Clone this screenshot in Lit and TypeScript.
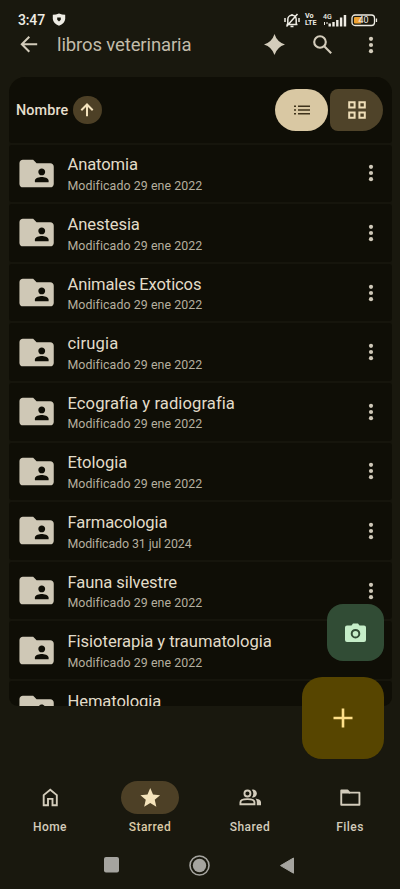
import { LitElement, html, css, svg } from "lit";
import { customElement, property } from "lit/decorators.js";

interface Folder {
  name: string;
  date: string;
  track: number;
  dateTrack?: number;
}

const folders: Folder[] = [
  { name: "Anatomia", date: "29 ene 2022", track: -0.13 },
  { name: "Anestesia", date: "29 ene 2022", track: -0.1 },
  { name: "Animales Exoticos", date: "29 ene 2022", track: -0.14 },
  { name: "cirugia", date: "29 ene 2022", track: 0.15 },
  { name: "Ecografia y radiografia", date: "29 ene 2022", track: 0.08 },
  { name: "Etologia", date: "29 ene 2022", track: -0.05 },
  { name: "Farmacologia", date: "31 jul 2024", track: -0.1, dateTrack: -0.1 },
  { name: "Fauna silvestre", date: "29 ene 2022", track: -0.1 },
  { name: "Fisioterapia y traumatologia", date: "29 ene 2022", track: -0.04 },
  { name: "Hematologia", date: "29 ene 2022", track: -0.1 },
];

const dots = html`<svg width="6" height="18" viewBox="0 0 6 18" fill="currentColor">
  <circle cx="3" cy="2.8" r="2.1" /><circle cx="3" cy="9" r="2.1" /><circle cx="3" cy="15.2" r="2.1" />
</svg>`;

@customElement("folder-row")
class FolderRow extends LitElement {
  @property({ attribute: false }) folder!: Folder;

  static styles = css`
    :host {
      display: flex;
      flex: none;
      height: 57.6px;
      box-sizing: border-box;
      padding: 0 17.6px 0 7.4px;
      align-items: center;
      background: #0f0e06;
      border-radius: 3px;
    }
    .folder { color: #cfc8b6; flex: none; }
    .texts { margin: 1.4px 0 0 10.4px; flex: 1; white-space: nowrap; }
    .name { font-size: 16.6px; line-height: 22px; color: #e2dcc9; }
    .date { font-size: 12.4px; line-height: 17px; margin-top: 0.6px; color: #b5af9f; }
    .more { color: #cfc8b8; display: flex; }
  `;

  render() {
    return html`
      <svg class="folder" width="41.2" height="41.2" viewBox="0 0 24 24" fill="currentColor">
        <path d="M20 6h-8l-2-2H4c-1.1 0-1.99.9-1.99 2L2 18c0 1.1.9 2 2 2h16c1.1 0 2-.9 2-2V8c0-1.1-.9-2-2-2zm-5 3c1.1 0 2 .9 2 2s-.9 2-2 2-2-.9-2-2 .9-2 2-2zm4 8h-8v-1c0-1.33 2.67-2 4-2s4 .67 4 2v1z" />
      </svg>
      <div class="texts">
        <div class="name" style="letter-spacing:${this.folder.track}px">${this.folder.name}</div>
        <div class="date" style="letter-spacing:${this.folder.dateTrack ?? 0.06}px">Modificado ${this.folder.date}</div>
      </div>
      <div class="more">${dots}</div>
    `;
  }
}

const tabs = [
  {
    label: "Home",
    icon: svg`<path d="M5 20.5V9.7L12 4l7 5.700V20.500H14.400V13.700H9.600V20.500Z" fill="none" stroke="currentColor" stroke-width="2"/>`,
  },
  {
    label: "Starred",
    active: true,
    icon: svg`<path fill="currentColor" d="M12 18.200 18.500 22.200l-1.720-7.450L22.500 9.780l-7.550-.640L12 2.200 9.050 9.140 1.500 9.780l5.720 4.970-1.720 7.450z"/>`,
  },
  {
    label: "Shared",
    icon: svg`<g fill="none" stroke="currentColor" stroke-width="2"><circle cx="9" cy="8" r="3.200"/><path d="M1.500 19.500v-2C1.500 14.900 6 14 9 14s7.500 .9 7.500 3.500v2z"/></g><path fill="currentColor" d="M13.600 12a5.500 5.500 0 0 0 0-8A4.200 4.200 0 1 1 13.600 12zM17.500 13.300c3 .5 6 1.600 6 4.100v3.100h-4.500v-3.200c0-1.600-.5-3-1.500-4z"/>`,
  },
  {
    label: "Files",
    icon: svg`<path d="M2.400 4.700h6.600l2.200 2.400h10.600V20H2.400z" fill="none" stroke="currentColor" stroke-width="2" stroke-linejoin="round"/><path fill="currentColor" d="M3 5h6l3 3H3z"/>`,
  },
];

@customElement("app-root")
class AppRoot extends LitElement {
  static styles = css`
    :host {
      display: flex;
      flex-direction: column;
      position: relative;
      width: 400px;
      height: 889px;
      overflow: hidden;
      background: #19180e;
      font-family: Roboto, "Liberation Sans", sans-serif;
      color: #d3ccbb;
    }
    svg { display: block; flex: none; }
    .status { height: 30px; flex: none; box-sizing: border-box; padding: 10px 22.500px 0 18px; display: flex; align-items: center; color: #eeece4; }
    .time { font-size: 14px; font-weight: 500; letter-spacing: -0.15px; width: 34px; }
    .signals { margin-left: auto; display: flex; align-items: center; }
    .volte { font-size: 7.200px; line-height: 6.600px; font-weight: 700; margin: 0 3px 0 5px; width: 13.500px; }
    .bar { height: 47px; flex: none; box-sizing: border-box; padding: 0 26px 18px 17.500px; display: flex; align-items: center; }
    .title { font-size: 18.500px; font-weight: 400; letter-spacing: -0.12px; margin-left: 16.500px; flex: 1; white-space: nowrap; color: #c3bcaa; }
    .bar .spark { margin-right: 28px; }
    .bar .search { margin-right: 36px; }
    .list { height: 629px; flex: none; margin: 0 8.500px; display: flex; flex-direction: column; gap: 2px; overflow: hidden; border-radius: 16px 16px 9px 9px; background: #16150c; }
    .head { height: 65.700px; flex: none; box-sizing: border-box; padding: 0 8.500px 0 7.500px; display: flex; align-items: center; background: #0f0e06; border-radius: 0 0 3px 3px; }
    .sort { font-size: 14.400px; font-weight: 500; color: #e6dfcd; width: 57px; letter-spacing: 0.1px; padding-top: 1px; }
    .arrow { width: 28.500px; height: 28.500px; border-radius: 50%; background: #4d4026; display: grid; place-items: center; }
    .modes { margin-left: auto; display: flex; gap: 2px; }
    .mode { width: 53px; height: 41.500px; display: grid; place-items: center; background: #4f4329; color: #eedeb8; border-radius: 8px 21px 21px 8px; }
    .mode.on { background: #d9c8a3; color: #3e321b; border-radius: 21px; }
    .fab { position: absolute; display: grid; place-items: center; }
    .camera { left: 326.500px; top: 604px; width: 57.500px; height: 57px; border-radius: 16px; background: #314c35; color: #c5edc8; }
    .add { left: 302px; top: 677px; width: 82px; height: 82px; border-radius: 20px; background: #574500; color: #ffe089; }
    .tabs { margin-top: 75px; height: 58px; flex: none; display: grid; grid-template-columns: repeat(4, 1fr); }
    .tab { display: flex; flex-direction: column; align-items: center; }
    .pill { width: 57.500px; height: 33px; border-radius: 17px; display: grid; place-items: center; }
    .active .pill { background: #4d4026; color: #f4e3bb; }
    .active { color: #dccba6; }
    .label { margin-top: 4.600px; font-size: 12px; line-height: 16px; font-weight: 500; letter-spacing: 0.45px; }
    .system { height: 50px; flex: none; display: flex; justify-content: center; align-items: center; gap: 70px; color: #a5a49f; padding: 1px 2px 0 0; }
  `;

  render() {
    return html`
      <div class="status">
        <div class="time">3:47</div>
        <svg width="14" height="14" viewBox="0 0 14 14"><path d="M7 .5Q10 1.800 13.200 1.800V6Q12.700 10.500 7 12.800Q1.300 10.500 .8 6V1.800Q4 1.800 7 .5Z" fill="currentColor"/><path d="M5.200 4.500h3.600v2.300L7 8.500L5.200 6.800z" fill="#19180e"/></svg>
        <div class="signals">
          <svg width="16" height="15" viewBox="0 0 16 15" fill="none" stroke="currentColor" stroke-width="1.500"><path d="M3.800 11V6.500a4.200 4.200 0 0 1 8.400 0V11M2.500 11.500h11M6.500 13.500h3M13.500 1 2.500 13.500M1 5v4M15 5v4M8 1v1.500"/></svg>
          <div class="volte">Vo<br />LTE</div>
          <svg width="25" height="15" viewBox="0 0 25 15" fill="currentColor"><text x="1" y="6.200" font-size="7" font-weight="500" fill="currentColor">4G</text><path d="M2.500 9v3M5 9v2" stroke="currentColor" fill="none"/><rect x="6.500" y="10.500" width="2.400" height="3"/><rect x="10.300" y="9" width="2.400" height="4.500"/><rect x="14.100" y="7" width="2.400" height="6.500"/><rect x="17.900" y="4.500" width="2.400" height="9"/><rect x="21.700" y="2" width="2.500" height="11.500"/></svg>
          <svg width="27" height="13" viewBox="0 0 27 13" style="margin-left:4px"><rect x="1" y="1" width="22.500" height="10.500" rx="3" fill="none" stroke="currentColor" stroke-width="1.300"/><rect x="3" y="3" width="7.500" height="6.500" rx="1" fill="#eda233"/><rect x="24.800" y="4.500" width="1.300" height="3.500" fill="currentColor"/><text x="7.500" y="9.400" font-size="9" fill="currentColor">40</text></svg>
        </div>
      </div>
      <div class="bar">
        <svg width="23" height="23" viewBox="0 0 23 23" fill="none" stroke="currentColor" stroke-width="2"><path d="M19.200 11.300H4M11.300 3.800 3.800 11.300l7.500 7.500"/></svg>
        <div class="title">libros veterinaria</div>
        <svg class="spark" width="21" height="21" viewBox="0 0 21 21" fill="currentColor"><path d="M10.500 0Q13 8 21 10.500Q13 13 10.500 21Q8 13 0 10.500Q8 8 10.500 0Z"/></svg>
        <svg class="search" width="19" height="19" viewBox="0 0 19 19" fill="none" stroke="currentColor" stroke-width="2.100"><circle cx="7" cy="7" r="5.800"/><path d="m11 11 7.200 7.200"/></svg>
        ${dots}
      </div>
      <div class="list">
        <div class="head">
          <div class="sort">Nombre</div>
          <div class="arrow"><svg width="14" height="14" viewBox="0 0 14 14" fill="none" stroke="#f3e2bd" stroke-width="2"><path d="M7 13.200V2M1.300 7.200 7 1.500 12.700 7.200"/></svg></div>
          <div class="modes">
            <div class="mode on"><svg width="16" height="10" viewBox="0 0 16 10" fill="currentColor"><path d="M4 .5h12V2H4zM4 4.200h12v1.500H4zM4 8h12v1.500H4zM0 .5h2V2H0zM0 4.200h2v1.500H0zM0 8h2v1.500H0z"/></svg></div>
            <div class="mode"><svg width="18" height="18" viewBox="0 0 18 18" fill="none" stroke="currentColor" stroke-width="2"><path d="M1.200 1.200h5.400v5.400H1.200zM11.400 1.200h5.400v5.400h-5.400zM1.200 11.400h5.400v5.400H1.200zM11.400 11.400h5.400v5.400h-5.400z"/></svg></div>
          </div>
        </div>
        ${folders.map((f) => html`<folder-row .folder=${f}></folder-row>`)}
      </div>
      <div class="tabs">
        ${tabs.map(
          (t) => html`<div class="tab ${t.active ? "active" : ""}">
            <div class="pill"><svg width="22.500" height="22.500" viewBox="0 0 24 24">${t.icon}</svg></div>
            <div class="label">${t.label}</div>
          </div>`,
        )}
      </div>
      <div class="system">
        <svg width="15" height="16" viewBox="0 0 15 16"><rect width="15" height="15.500" rx="2" fill="currentColor"/></svg>
        <svg width="21" height="21" viewBox="0 0 21 21"><circle cx="10.500" cy="10.500" r="9.500" fill="none" stroke="currentColor" stroke-width="1.600"/><circle cx="10.500" cy="10.500" r="6.700" fill="currentColor"/></svg>
        <svg width="14" height="17" viewBox="0 0 14 17"><path d="M13.500 1v15.200L.5 8.600z" fill="currentColor" stroke="currentColor" stroke-linejoin="round"/></svg>
      </div>
      <div class="fab camera"><svg width="21" height="19" viewBox="0 0 21 19"><path fill="currentColor" d="M2 2.500h4.500L8 .5h5l1.500 2H19a2 2 0 0 1 2 2V17a2 2 0 0 1-2 2H2a2 2 0 0 1-2-2V4.500a2 2 0 0 1 2-2z"/><circle cx="10.500" cy="10.700" r="3.800" fill="none" stroke="#314c35" stroke-width="2"/></svg></div>
      <div class="fab add"><svg width="20" height="20" viewBox="0 0 20 20" fill="none" stroke="currentColor" stroke-width="2.600"><path d="M10 .5v19M.5 10h19"/></svg></div>
    `;
  }
}
